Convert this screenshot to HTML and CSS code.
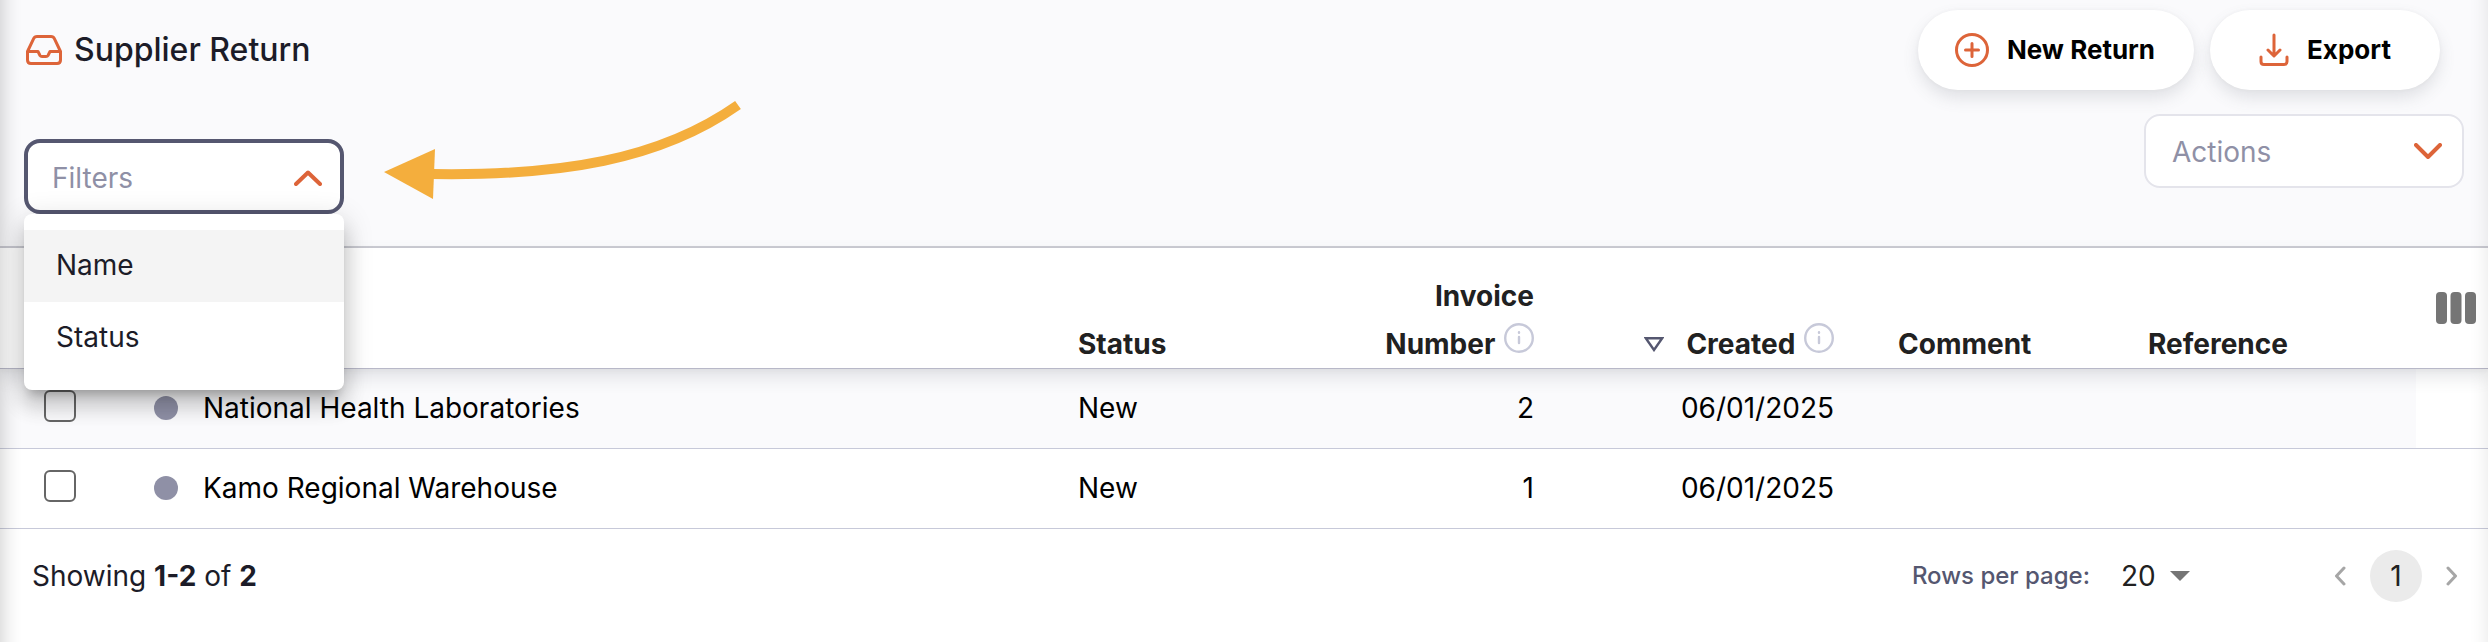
FILE: index.html
```html
<!DOCTYPE html>
<html lang="en">
<head>
<meta charset="utf-8">
<title>Supplier Return</title>
<link rel="stylesheet" href="styles.css">
</head>
<body>
<main class="page">
  <header class="toolbar">
    <div class="toolbar-left">
      <h1 class="title">
        <svg class="title-icon" viewBox="0 0 36 30" aria-hidden="true"><path d="M1.5 16.5 7.5 3.8Q8.600 1.500 11 1.500H25Q27.400 1.500 28.500 3.800L34.500 16.500V25Q34.500 28.500 31 28.500H5Q1.500 28.500 1.500 25ZM1.500 16.500H12L14 20.500Q14.600 21.500 16 21.500H20Q21.400 21.500 22 20.500L24 16.500H34.500"/></svg>
        Supplier Return
      </h1>
      <div class="filters">
        <button class="field field-open" type="button" aria-haspopup="menu" aria-expanded="true">
          Filters
          <svg class="chevron" viewBox="0 0 28 16" aria-hidden="true"><path d="M2 14 14 2.500 26 14"/></svg>
        </button>
        <ul class="menu">
          <li><button class="menu-item is-active" type="button">Name</button></li>
          <li><button class="menu-item" type="button">Status</button></li>
        </ul>
      </div>
    </div>
    <div class="toolbar-right">
      <div class="buttons">
        <button class="pill pill-new" type="button">
          <svg class="icon-plus" viewBox="0 0 34 34" aria-hidden="true"><circle cx="17" cy="17" r="15.500"/><path d="M17 10.500V23.500M10.500 17H23.500"/></svg>
          New Return
        </button>
        <button class="pill pill-export" type="button">
          <svg class="icon-download" viewBox="0 0 30 34" aria-hidden="true"><path d="M15 2V22M9 17 15 23 21 17M2 24V28.500Q2 31.500 5 31.500H25Q28 31.500 28 28.500V24"/></svg>
          Export
        </button>
      </div>
      <div class="select-wrap">
        <select class="field" aria-label="Actions"><option>Actions</option></select>
        <svg class="chevron" viewBox="0 0 28 16" aria-hidden="true"><path d="M2 2 14 14 26 2"/></svg>
      </div>
    </div>
    <svg class="arrow" viewBox="380 95 370 110" aria-hidden="true"><path class="arrow-line" d="M432 174C560 176 660 160 738 105"/><path class="arrow-head" d="M384 172 435 149 433 199Z"/></svg>
  </header>

  <table class="grid">
    <colgroup>
      <col class="col-check"><col class="col-name"><col class="col-status"><col class="col-number"><col class="col-date"><col class="col-comment"><col class="col-ref"><col class="col-tools">
    </colgroup>
    <thead>
      <tr>
        <td></td>
        <td></td>
        <th scope="col">Status</th>
        <th scope="col" class="num">Invoice<br>Number
          <svg class="info" viewBox="0 0 30 30" aria-hidden="true"><circle cx="15" cy="15" r="13.800"/><path d="M15 14V20M15 9.200V9.800"/></svg></th>
        <th scope="col" class="num"><svg class="sort" viewBox="0 0 20 15" aria-hidden="true"><path d="M1.800 1.200H18.200L10 13Z"/></svg>Created
          <svg class="info" viewBox="0 0 30 30" aria-hidden="true"><circle cx="15" cy="15" r="13.800"/><path d="M15 14V20M15 9.200V9.800"/></svg></th>
        <th scope="col">Comment</th>
        <th scope="col">Reference</th>
        <td class="tools"><button class="columns" type="button" aria-label="Columns"><svg viewBox="0 0 40 32" aria-hidden="true"><rect width="11" height="32" rx="4"/><rect x="14.500" width="11" height="32" rx="4"/><rect x="29" width="11" height="32" rx="4"/></svg></button></td>
      </tr>
    </thead>
    <tbody>
      <tr>
        <td class="check"><input type="checkbox" aria-label="National Health Laboratories"></td>
        <td class="name"><span class="name-inner"><span class="dot"></span>National Health Laboratories</span></td>
        <td>New</td>
        <td class="num">2</td>
        <td class="num">06/01/2025</td>
        <td></td>
        <td></td>
        <td class="tools"></td>
      </tr>
      <tr>
        <td class="check"><input type="checkbox" aria-label="Kamo Regional Warehouse"></td>
        <td class="name"><span class="name-inner"><span class="dot"></span>Kamo Regional Warehouse</span></td>
        <td>New</td>
        <td class="num">1</td>
        <td class="num">06/01/2025</td>
        <td></td>
        <td></td>
        <td class="tools"></td>
      </tr>
    </tbody>
  </table>

  <footer class="footer">
    <p class="showing">Showing <b>1-2</b> of <b>2</b></p>
    <div class="paging">
      <label class="rows-label" for="rows">Rows per page:</label>
      <div class="rows-wrap">
        <select class="rows" id="rows"><option>20</option></select>
        <svg class="caret" viewBox="0 0 20 10" aria-hidden="true"><path d="M0 0H20L10 10Z"/></svg>
      </div>
      <nav class="pages" aria-label="Pages">
        <button class="step" type="button" aria-label="Previous page"><svg viewBox="0 0 12 20" aria-hidden="true"><path d="M10 2 2.500 10 10 18"/></svg></button>
        <button class="current" type="button">1</button>
        <button class="step" type="button" aria-label="Next page"><svg viewBox="0 0 12 20" aria-hidden="true"><path d="M2 2 9.500 10 2 18"/></svg></button>
      </nav>
    </div>
  </footer>
</main>
</body>
</html>
```

FILE: styles.css
```css
* {
  box-sizing: border-box;
}

body {
  margin: 0;
  background: #fff;
  color: #1c1c28;
  font-family: Inter, "Liberation Sans", sans-serif;
  font-size: 28px;
  line-height: 48px;
}

button,
select {
  font: inherit;
  color: inherit;
  border: 0;
  padding: 0;
  background: none;
  cursor: pointer;
}

svg {
  display: block;
  flex: none;
  fill: none;
  stroke-linecap: round;
  stroke-linejoin: round;
}

.page {
  min-height: 100vh;
}

/* Soft shade along both window edges */
.page::after {
  content: "";
  position: fixed;
  inset: -40px 0;
  z-index: 5;
  pointer-events: none;
  box-shadow: inset 14px 0 20px -12px rgba(0, 0, 0, 0.2), inset -14px 0 20px -14px rgba(0, 0, 0, 0.1);
}

/* Toolbar */
.toolbar {
  position: relative;
  display: flex;
  justify-content: space-between;
  padding: 10px 24px 32px;
  background: #fafafc;
  border-bottom: 2px solid #cbcbd3;
}

.toolbar-left {
  display: flex;
  flex-direction: column;
  gap: 49px;
}

.title {
  display: flex;
  align-items: center;
  gap: 12px;
  height: 80px;
  margin: 0;
  padding-left: 2px;
  font-size: 32px;
  font-weight: 500;
}

.title-icon {
  width: 36px;
  height: 30px;
  stroke: #dd6439;
  stroke-width: 3;
}

.filters {
  position: relative;
  width: 320px;
}

.field {
  display: flex;
  align-items: center;
  justify-content: space-between;
  width: 320px;
  height: 74px;
  padding: 2px 20px 0 26px;
  appearance: none;
  background: #fff;
  border: 2px solid #e4e4eb;
  border-radius: 16px;
  color: #8f90a6;
}

.field-open {
  height: 75px;
  padding: 2px 18px 0 24px;
  border: 4px solid #555770;
}

.chevron {
  width: 28px;
  height: 16px;
  stroke: #dd6439;
  stroke-width: 4;
}

.menu {
  position: absolute;
  top: 100%;
  left: 0;
  z-index: 3;
  width: 100%;
  margin: 0;
  padding: 16px 0;
  list-style: none;
  background: #fff;
  border-radius: 8px;
  box-shadow: 0 10px 10px -6px rgba(0, 0, 0, 0.2), 0 16px 20px 2px rgba(0, 0, 0, 0.14), 0 6px 28px 4px rgba(0, 0, 0, 0.12);
}

.menu-item {
  display: block;
  width: 100%;
  height: 72px;
  padding: 0 32px 2px;
  text-align: left;
}

.is-active {
  background: #f4f4f4;
}

.toolbar-right {
  display: flex;
  flex-direction: column;
  align-items: flex-end;
  gap: 24px;
}

.buttons {
  display: flex;
  gap: 16px;
  padding-right: 24px;
}

.pill {
  display: flex;
  align-items: center;
  justify-content: center;
  gap: 18px;
  height: 80px;
  background: #fff;
  border-radius: 48px;
  box-shadow: 0 8px 16px rgba(96, 97, 112, 0.16), 0 0 4px rgba(40, 41, 61, 0.04);
  color: #000;
  font-size: 26px;
  font-weight: 700;
}

.pill-new {
  min-width: 276px;
  padding-right: 2px;
}

.pill-export {
  min-width: 230px;
}

.icon-plus {
  width: 34px;
  height: 34px;
  stroke: #dd6439;
  stroke-width: 3;
}

.icon-download {
  width: 30px;
  height: 34px;
  stroke: #dd6439;
  stroke-width: 3;
}

.select-wrap,
.rows-wrap {
  display: grid;
  align-items: center;
}

.select-wrap > *,
.rows-wrap > * {
  grid-area: 1 / 1;
}

.select-wrap .chevron,
.caret {
  justify-self: end;
  pointer-events: none;
}

.select-wrap .chevron {
  margin-right: 22px;
}

.arrow {
  position: absolute;
  top: 95px;
  left: 380px;
  width: 370px;
  height: 110px;
}

.arrow-line {
  stroke: #f4ae3d;
  stroke-width: 10;
  stroke-linecap: butt;
}

.arrow-head {
  fill: #f4ae3d;
}

/* Table */
.grid {
  width: 100%;
  table-layout: fixed;
  border-collapse: separate;
  border-spacing: 0;
  color: #000;
}

.col-check { width: 122px; }
.col-status { width: 220px; }
.col-number { width: 300px; }
.col-date { width: 300px; }
.col-comment { width: 250px; }
.col-ref { width: 300px; }
.col-tools { width: 72px; }

.grid th,
.grid td {
  padding: 0 32px;
  text-align: left;
}

.grid .num {
  text-align: right;
}

.grid thead {
  position: relative;
  z-index: 1;
  background: #fff;
  box-shadow: 0 8px 16px rgba(96, 97, 112, 0.16), 0 2px 4px rgba(40, 41, 61, 0.04);
}

.grid thead th,
.grid thead td {
  height: 121px;
  padding-top: 24px;
  vertical-align: bottom;
  border-bottom: 1px solid #b8b8c8;
  color: #212121;
  font-weight: 700;
}

.info,
.sort {
  display: inline-block;
}

.info {
  width: 30px;
  height: 30px;
  margin-left: 2px;
  margin-bottom: 1px;
  vertical-align: baseline;
  stroke: #c7c9d9;
  stroke-width: 2.4;
}

.sort {
  width: 20px;
  height: 15px;
  margin-right: 22px;
  margin-bottom: 2px;
  stroke: #555770;
  stroke-width: 2.4;
  stroke-linejoin: miter;
}

.grid thead .tools {
  padding: 0 12px 0 20px;
  vertical-align: middle;
}

.columns {
  display: block;
}

.columns svg {
  width: 40px;
  height: 32px;
  fill: #757575;
}

.grid tbody td {
  height: 80px;
  padding-bottom: 2px;
  border-bottom: 1px solid #c7c9d9;
}

.grid tbody tr:nth-child(odd) td:not(.tools) {
  background: #fafafc;
}

.grid tbody .check {
  padding: 0 0 6px 44px;
}

.check input {
  display: block;
  width: 32px;
  height: 32px;
  margin: 0;
  appearance: none;
  border: 2px solid #666;
  border-radius: 6px;
}

.name-inner {
  display: flex;
  align-items: center;
  gap: 25px;
}

.dot {
  flex: none;
  width: 24px;
  height: 24px;
  border-radius: 50%;
  background: #8f90a6;
}

/* Footer */
.footer {
  display: flex;
  align-items: center;
  justify-content: space-between;
  padding: 21px 30px 20px 32px;
}

.showing {
  margin: 0;
}

.paging {
  display: flex;
  align-items: center;
}

.rows-label {
  margin-right: 31px;
  color: #555770;
  font-size: 24px;
  font-weight: 500;
}

.rows-wrap {
  width: 69px;
  margin-right: 144px;
}

.rows {
  width: 100%;
  height: 52px;
  appearance: none;
  color: #212121;
}

.caret {
  width: 20px;
  height: 10px;
  fill: #757575;
}

.pages {
  display: flex;
  align-items: center;
  gap: 24px;
}

.step svg {
  width: 12px;
  height: 20px;
  stroke: #a6a6a6;
  stroke-width: 3;
}

.current {
  width: 52px;
  height: 52px;
  background: #ebebeb;
  border-radius: 50%;
  color: #212121;
}
```
